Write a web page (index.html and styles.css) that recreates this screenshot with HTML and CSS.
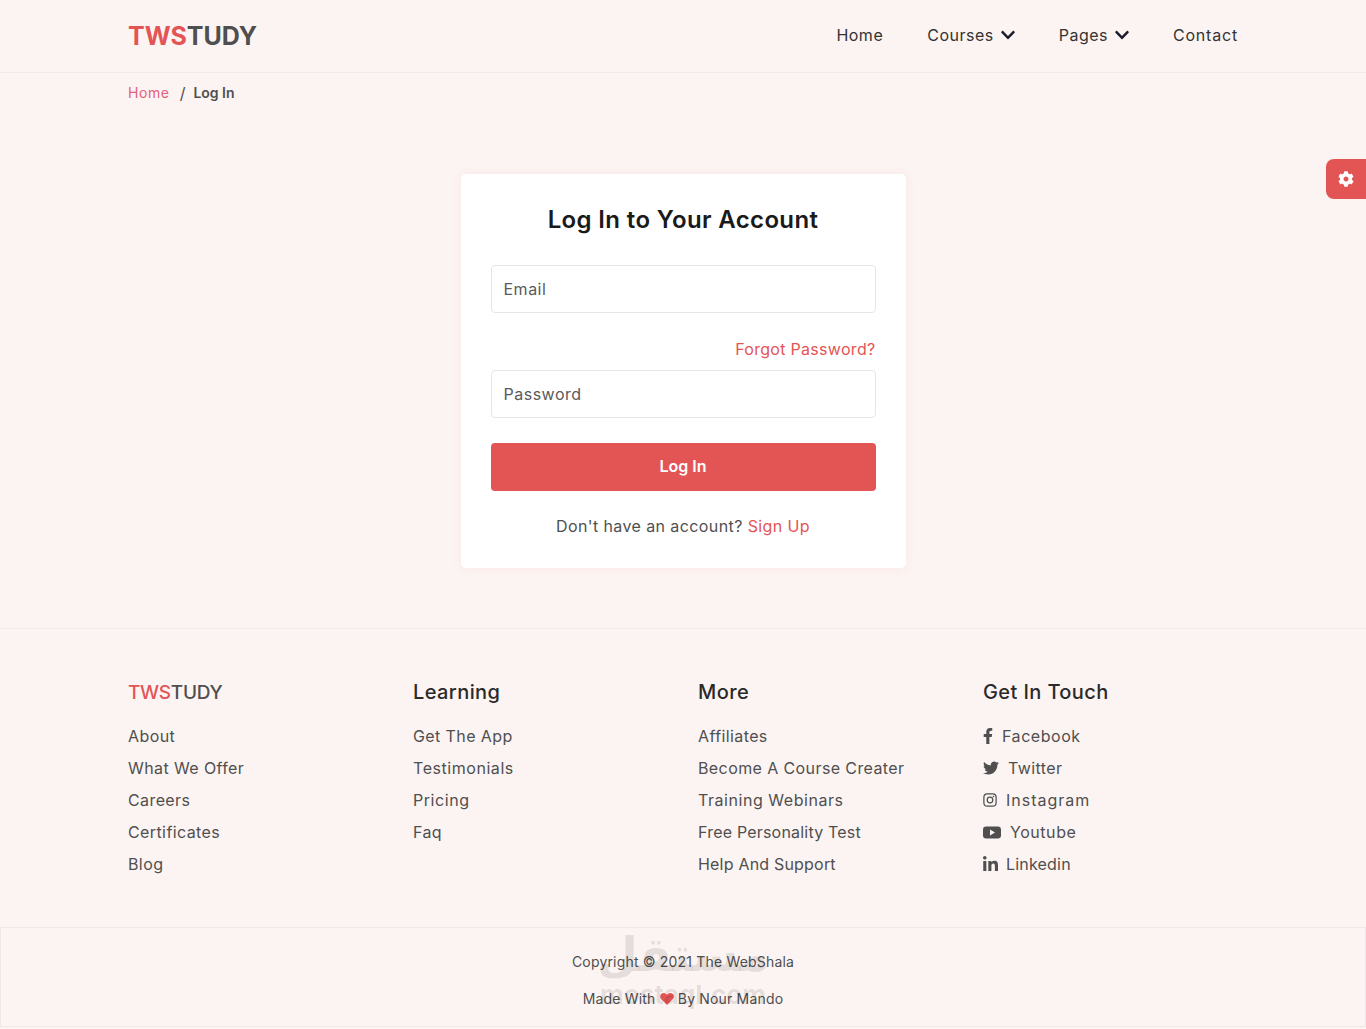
FILE: index.html
```html
<!DOCTYPE html>
<html lang="en">
<head>
<meta charset="utf-8">
<title>Log In - TWSTUDY</title>
<link rel="stylesheet" href="styles.css">
</head>
<body>
<header class="site-header">
  <div class="container header-row">
    <a class="logo"><span class="red">TWS</span>TUDY</a>
    <nav class="nav">
      <a class="nav-home">Home</a>
      <a class="nav-courses">Courses <svg class="chev" viewBox="0 0 448 512"><path d="M207.029 381.476L12.686 187.132c-9.373-9.373-9.373-24.569 0-33.941l22.667-22.667c9.357-9.357 24.522-9.375 33.901-.04L224 284.505l154.745-154.021c9.379-9.335 24.544-9.317 33.901.04l22.667 22.667c9.373 9.373 9.373 24.569 0 33.941L240.971 381.476c-9.373 9.372-24.569 9.372-33.942 0z"/></svg></a>
      <a class="nav-pages">Pages <svg class="chev" viewBox="0 0 448 512"><path d="M207.029 381.476L12.686 187.132c-9.373-9.373-9.373-24.569 0-33.941l22.667-22.667c9.357-9.357 24.522-9.375 33.901-.04L224 284.505l154.745-154.021c9.379-9.335 24.544-9.317 33.901.04l22.667 22.667c9.373 9.373 9.373 24.569 0 33.941L240.971 381.476c-9.373 9.372-24.569 9.372-33.942 0z"/></svg></a>
      <a class="nav-contact">Contact</a>
    </nav>
  </div>
</header>

<button class="settings" aria-label="Settings"><svg viewBox="0 0 512 512"><path d="M487.4 315.7l-42.6-24.6c4.3-23.2 4.3-47 0-70.2l42.6-24.6c4.9-2.8 7.1-8.6 5.5-14-11.1-35.6-30-67.8-54.7-94.6-3.8-4.1-10-5.1-14.8-2.3L380.8 110c-17.9-15.4-38.5-27.3-60.8-35.1V25.8c0-5.6-3.9-10.5-9.4-11.7-36.7-8.2-74.3-7.8-109.2 0-5.5 1.2-9.4 6.1-9.4 11.7V75c-22.2 7.9-42.8 19.8-60.8 35.1L88.7 85.5c-4.9-2.8-11-1.9-14.8 2.3-24.7 26.7-43.6 58.9-54.7 94.6-1.7 5.4.6 11.2 5.5 14L67.3 221c-4.3 23.2-4.3 47 0 70.2l-42.6 24.6c-4.9 2.8-7.1 8.6-5.5 14 11.1 35.6 30 67.8 54.7 94.6 3.8 4.1 10 5.1 14.8 2.3l42.6-24.6c17.9 15.4 38.5 27.3 60.8 35.1v49.2c0 5.6 3.9 10.5 9.4 11.7 36.7 8.2 74.3 7.8 109.2 0 5.5-1.2 9.4-6.1 9.4-11.7v-49.2c22.2-7.9 42.8-19.8 60.8-35.1l42.6 24.6c4.9 2.8 11 1.9 14.8-2.3 24.7-26.7 43.6-58.9 54.7-94.6 1.5-5.5-.7-11.3-5.6-14.1zM256 336c-44.1 0-80-35.9-80-80s35.9-80 80-80 80 35.9 80 80-35.9 80-80 80z"/></svg></button>

<main class="main">
  <div class="container crumbs">
    <a class="crumb-home">Home</a><span class="crumb-sep">/</span><span class="crumb-cur">Log In</span>
  </div>
  <form class="card">
    <h1 class="card-title">Log In to Your Account</h1>
    <input class="field" type="text" placeholder="Email">
    <a class="forgot">Forgot Password?</a>
    <input class="field" type="password" placeholder="Password">
    <button class="submit" type="button">Log In</button>
    <p class="signup">Don't have an account? <a class="red">Sign Up</a></p>
  </form>
</main>

<footer class="footer">
  <div class="container footer-grid">
    <div>
      <h2 class="foot-title foot-brand"><span class="red">TWS</span>TUDY</h2>
      <ul class="foot-list">
        <li><a>About</a></li>
        <li><a>What We Offer</a></li>
        <li><a>Careers</a></li>
        <li><a>Certificates</a></li>
        <li><a>Blog</a></li>
      </ul>
    </div>
    <div>
      <h2 class="foot-title">Learning</h2>
      <ul class="foot-list">
        <li><a>Get The App</a></li>
        <li><a class="wider">Testimonials</a></li>
        <li><a class="wider">Pricing</a></li>
        <li><a>Faq</a></li>
      </ul>
    </div>
    <div>
      <h2 class="foot-title">More</h2>
      <ul class="foot-list">
        <li><a>Affiliates</a></li>
        <li><a>Become A Course Creater</a></li>
        <li><a class="wider">Training Webinars</a></li>
        <li><a class="tight">Free Personality Test</a></li>
        <li><a class="tight">Help And Support</a></li>
      </ul>
    </div>
    <div>
      <h2 class="foot-title">Get In Touch</h2>
      <ul class="foot-list">
        <li class="social"><svg class="ico ico-fb" viewBox="0 0 320 512"><path d="M279.14 288l14.22-92.66h-88.91v-60.13c0-25.35 12.42-50.06 52.24-50.06h40.42V6.26S260.43 0 225.36 0c-73.22 0-121.08 44.38-121.08 124.72v70.62H22.89V288h81.39v224h100.17V288z"/></svg><a class="wider">Facebook</a></li>
        <li class="social"><svg class="ico ico-tw" viewBox="0 0 512 512"><path d="M459.37 151.716c.325 4.548.325 9.097.325 13.645 0 138.72-105.583 298.558-298.558 298.558-59.452 0-114.68-17.219-161.137-47.106 8.447.974 16.568 1.299 25.34 1.299 49.055 0 94.213-16.568 130.274-44.832-46.132-.975-84.792-31.188-98.112-72.772 6.498.974 12.995 1.624 19.818 1.624 9.421 0 18.843-1.3 27.614-3.573-48.081-9.747-84.143-51.98-84.143-102.985v-1.299c13.969 7.797 30.214 12.67 47.431 13.319-28.264-18.843-46.781-51.005-46.781-87.391 0-19.492 5.197-37.36 14.294-52.954 51.655 63.675 129.3 105.258 216.365 109.807-1.624-7.797-2.599-15.918-2.599-24.04 0-57.828 46.782-104.934 104.934-104.934 30.213 0 57.502 12.67 76.67 33.137 23.715-4.548 46.456-13.32 66.599-25.34-7.798 24.366-24.366 44.833-46.132 57.827 21.117-2.273 41.584-8.122 60.426-16.243-14.292 20.791-32.161 39.308-52.628 54.253z"/></svg><a>Twitter</a></li>
        <li class="social"><svg class="ico ico-ig" viewBox="0 0 16 16"><rect class="ig-line" x="1" y="1" width="14" height="14" rx="4"/><circle class="ig-line" cx="8" cy="8" r="3.2"/><circle cx="12" cy="4" r="0.9"/></svg><a class="wide">Instagram</a></li>
        <li class="social"><svg class="ico ico-yt" viewBox="0 0 18 13"><rect x="0" y="0.5" width="18" height="12" rx="3.2"/><path class="yt-play" d="M7 3.6v5.8l5-2.9z"/></svg><a class="wider">Youtube</a></li>
        <li class="social"><svg class="ico ico-in" viewBox="0 0 448 448"><path d="M100.28 448H7.4V148.9h92.88zM53.79 108.1C24.09 108.1 0 83.5 0 53.8a53.79 53.79 0 0 1 107.58 0c0 29.7-24.1 54.3-53.79 54.3zM447.9 448h-92.68V302.4c0-34.7-.7-79.2-48.29-79.2-48.29 0-55.69 37.7-55.69 76.7V448h-92.78V148.9h89.08v40.8h1.3c12.4-23.5 42.69-48.3 87.88-48.3 94 0 111.28 61.9 111.28 142.3V448z"/></svg><a class="tight">Linkedin</a></li>
      </ul>
    </div>
  </div>
  <div class="copyright">
    <p class="copy-line">Copyright © 2021 The WebShala</p>
    <p class="copy-line">Made With <svg class="heart" viewBox="0 0 16 14"><path d="M8 14L1.3 7.2C-.4 5.4-.4 2.8 1.2 1.2 2.9-.4 5.5-.4 7.2 1.3L8 2.1l.8-.8c1.7-1.7 4.3-1.7 6 0 1.6 1.6 1.6 4.2-.1 6z"/></svg> By Nour Mando</p>
    <div class="watermark" aria-hidden="true"><span class="wm-ar" lang="ar" dir="rtl">مستقل</span><span class="wm-en">mostaql.com</span></div>
  </div>
</footer>
</body>
</html>
```
FILE: styles.css
```css
* { box-sizing: border-box; }
html, body { margin: 0; padding: 0; }
body {
  background: #fcf4f2;
  color: #4f4f4f;
  font-family: Inter, "Open Sans", "Liberation Sans", sans-serif;
  font-size: 16px;
  line-height: 24px;
  letter-spacing: 0.4px;
}
a { color: inherit; text-decoration: none; }
.red { color: #e35555; }
.container { width: 1140px; margin: 0 auto; padding: 0 15px; }

.site-header { height: 73px; border-bottom: 1px solid #f3eaea; }
.header-row { height: 72px; padding-bottom: 2px; display: flex; align-items: center; justify-content: space-between; }
.logo { margin-top: 2px; font-size: 25px; font-weight: 700; color: #4f4f4f; letter-spacing: 0; }
.nav { display: flex; gap: 44px; color: #333; font-size: 16px; letter-spacing: 0.5px; }
.nav a { display: flex; align-items: center; gap: 7px; }
.nav .nav-contact { letter-spacing: 0.8px; }
.chev { width: 14px; height: 16px; fill: #1c1c2c; }

.settings {
  position: absolute; top: 159px; right: 0;
  width: 40px; height: 40px; border: 0; padding: 0;
  border-radius: 8px 0 0 8px; background: #e35555;
  display: flex; align-items: center; justify-content: center;
}
.settings svg { width: 16px; height: 16px; fill: #fff; }

.main { padding-bottom: 60px; }
.crumbs { height: 41px; padding-bottom: 2px; display: flex; align-items: center; font-size: 14px; letter-spacing: 0; }
.crumb-home { color: #e55f7d; letter-spacing: 0.6px; }
.crumb-sep { margin: 0 8px 0 10px; font-size: 16px; color: #4f4f4f; }
.crumb-cur { font-weight: 600; }

.card {
  width: 445px; margin: 60px auto 0; padding: 30px;
  background: #fff; border-radius: 5px;
  box-shadow: 0 0 10px rgba(229, 83, 83, 0.08);
  display: flex; flex-direction: column;
}
.card-title { margin: 0 0 29px; font-size: 24px; line-height: 32px; font-weight: 600; color: #1a1a1a; text-align: center; letter-spacing: 0.36px; }
.field {
  display: block; width: 100%; height: 48px;
  padding: 0 12px; border: 1px solid #e6e6e6; border-radius: 4px;
  background: #fff; font: inherit; letter-spacing: 0.5px; color: #4f4f4f; outline: none;
}
.field::placeholder { color: #5a5a5a; opacity: 1; }
.forgot { margin: 24px 0 9px; text-align: right; color: #e35555; letter-spacing: 0.3px; }
.submit {
  margin-top: 25px; height: 48px; padding: 0 0 2px; border: 0; border-radius: 4px;
  background: #e35555; color: #fff; font: inherit; font-weight: 600; letter-spacing: 0;
}
.signup { margin: 23px 0 0; text-align: center; }

.footer { border-top: 1px solid #f3eaea; }
.footer-grid { display: grid; grid-template-columns: repeat(4, 285px); padding-top: 48px; padding-bottom: 47px; }
.foot-title { margin: 0 0 13px; font-size: 20px; line-height: 30px; font-weight: 500; color: #2a2a2a; }
.foot-brand { padding-top: 1px; margin-bottom: 12px; font-size: 19px; letter-spacing: -0.3px; color: #4f4f4f; }
.foot-list { list-style: none; margin: 0; padding: 0; }
.foot-list li { height: 32px; display: flex; align-items: center; }
.wide { letter-spacing: 1px; }
.wider { letter-spacing: 0.55px; }
.tight { letter-spacing: 0.2px; }
.ico { flex: none; fill: #4f4f4f; }
.ico-fb { width: 10px; height: 16px; margin-right: 9px; }
.ico-tw { width: 16px; height: 16px; margin-right: 9px; }
.ico-ig { width: 14px; height: 14px; margin-right: 9px; }
.ico-yt { width: 18px; height: 13px; margin-right: 9px; }
.ico-in { width: 15px; height: 15px; margin: 0 8px 2px 0; }
.ig-line { fill: none; stroke: #4f4f4f; stroke-width: 1.4; }
.yt-play { fill: #fcf4f2; }

.copyright {
  position: relative; height: 100px; overflow: hidden;
  border: 1px solid #f0e8e8; text-align: center; font-size: 14px; letter-spacing: 0.18px;
  padding-top: 22px;
}
.copy-line { margin: 0 0 13px; }
.heart { width: 14px; height: 12px; fill: #e35555; vertical-align: -1px; }
.watermark {
  position: absolute; left: 0; right: 0; top: 0; bottom: 0;
  display: flex; flex-direction: column; align-items: center;
  color: rgba(0, 0, 0, 0.1); pointer-events: none; letter-spacing: 0;
}
.wm-ar { font-family: "DejaVu Sans", sans-serif; font-size: 47px; line-height: 54px; font-weight: 700; }
.wm-en { font-size: 26px; line-height: 26px; font-weight: 700; }
```
